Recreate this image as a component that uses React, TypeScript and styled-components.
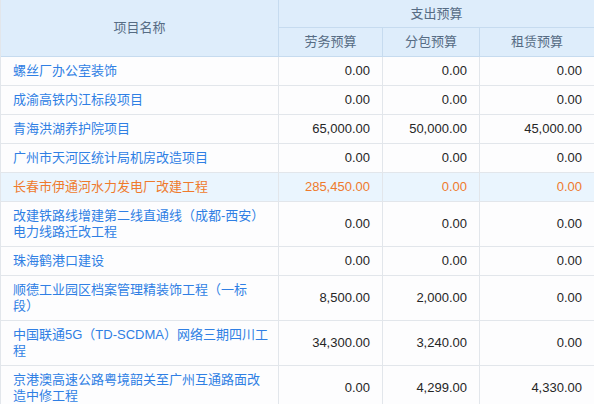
import React from "react";
import styled, { createGlobalStyle } from "styled-components";

const Global = createGlobalStyle`
  html, body { margin: 0; padding: 0; background: #fff; overflow: hidden; }
  body { font-family: "Liberation Sans", "Noto Sans CJK SC", sans-serif; }
`;

const Table = styled.table`
  width: 595px;
  table-layout: fixed;
  border-collapse: separate;
  border-spacing: 0;
  border-left: 1px solid #e2e6eb;
  font-size: 13px;
  line-height: 16px;
`;

const HeadCell = styled.th<{ $h: number }>`
  box-sizing: border-box;
  height: ${(p) => p.$h}px;
  padding: 0 12px;
  background: #deedfb;
  color: #566c84;
  font-weight: normal;
  text-align: center;
  border-right: 1px solid #c6dbef;
  border-bottom: 1px solid #c6dbef;
`;

const Row = styled.tr<{ $active?: boolean }>`
  background: ${(p) => (p.$active ? "#eaf5fe" : "#fdfdfe")};
`;

const NameCell = styled.td<{ $active?: boolean }>`
  box-sizing: border-box;
  padding: 6px 4px 6px 12px;
  color: ${(p) => (p.$active ? "#ef7a2c" : "#2f7fe4")};
  border-right: 1px solid #e2e6eb;
  border-bottom: 1px solid #e2e6eb;
  vertical-align: middle;
`;

const Line = styled.span`
  display: block;
  white-space: nowrap;
`;

const NumCell = styled.td<{ $active?: boolean }>`
  box-sizing: border-box;
  padding: 6px 12px;
  text-align: right;
  color: ${(p) => (p.$active ? "#ef7a2c" : "#262626")};
  border-right: 1px solid #e2e6eb;
  border-bottom: 1px solid #e2e6eb;
  vertical-align: middle;
  white-space: nowrap;
`;

type Item = { name: string[]; a: string; b: string; c: string; active?: boolean };

const items: Item[] = [
  { name: ["螺丝厂办公室装饰"], a: "0.00", b: "0.00", c: "0.00" },
  { name: ["成渝高铁内江标段项目"], a: "0.00", b: "0.00", c: "0.00" },
  { name: ["青海洪湖养护院项目"], a: "65,000.00", b: "50,000.00", c: "45,000.00" },
  { name: ["广州市天河区统计局机房改造项目"], a: "0.00", b: "0.00", c: "0.00" },
  { name: ["长春市伊通河水力发电厂改建工程"], a: "285,450.00", b: "0.00", c: "0.00", active: true },
  { name: ["改建铁路线增建第二线直通线（成都-西安）", "电力线路迁改工程"], a: "0.00", b: "0.00", c: "0.00" },
  { name: ["珠海鹤港口建设"], a: "0.00", b: "0.00", c: "0.00" },
  { name: ["顺德工业园区档案管理精装饰工程（一标", "段）"], a: "8,500.00", b: "2,000.00", c: "0.00" },
  { name: ["中国联通5G（TD-SCDMA）网络三期四川工", "程"], a: "34,300.00", b: "3,240.00", c: "0.00" },
  { name: ["京港澳高速公路粤境韶关至广州互通路面改", "造中修工程"], a: "0.00", b: "4,299.00", c: "4,330.00" },
];

export default function App() {
  return (
    <>
      <Global />
      <Table>
        <colgroup>
          <col style={{ width: 278 }} />
          <col style={{ width: 104 }} />
          <col style={{ width: 97 }} />
          <col style={{ width: 115 }} />
        </colgroup>
        <thead>
          <tr>
            <HeadCell $h={57} rowSpan={2}>项目名称</HeadCell>
            <HeadCell $h={28} colSpan={3}>支出预算</HeadCell>
          </tr>
          <tr>
            <HeadCell $h={29}>劳务预算</HeadCell>
            <HeadCell $h={29}>分包预算</HeadCell>
            <HeadCell $h={29}>租赁预算</HeadCell>
          </tr>
        </thead>
        <tbody>
          {items.map((it) => (
            <Row key={it.name.join("")} $active={it.active}>
              <NameCell $active={it.active}>
                {it.name.map((l) => (
                  <Line key={l}>{l}</Line>
                ))}
              </NameCell>
              <NumCell $active={it.active}>{it.a}</NumCell>
              <NumCell $active={it.active}>{it.b}</NumCell>
              <NumCell $active={it.active}>{it.c}</NumCell>
            </Row>
          ))}
        </tbody>
      </Table>
    </>
  );
}
